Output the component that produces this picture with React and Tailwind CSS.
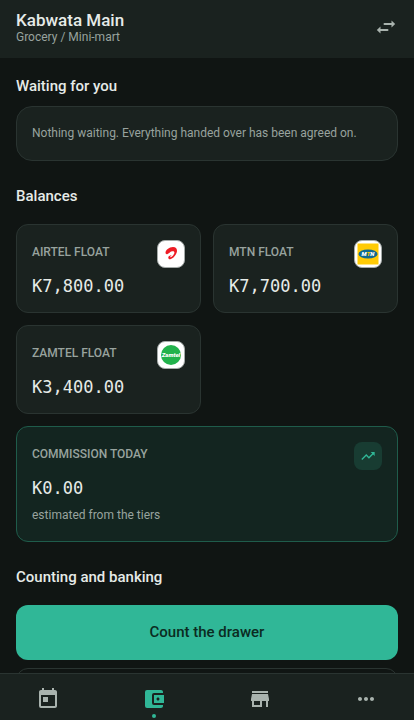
import { useState } from "react";
import {
  MdToday, MdAccountBalanceWallet, MdStore, MdMoreHoriz, MdTrendingUp,
} from "react-icons/md";

const FLOATS = [
  { id: "airtel", label: "AIRTEL FLOAT", amount: "K7,800.00", Logo: AirtelLogo },
  { id: "mtn", label: "MTN FLOAT", amount: "K7,700.00", Logo: MtnLogo },
  { id: "zamtel", label: "ZAMTEL FLOAT", amount: "K3,400.00", Logo: ZamtelLogo },
];

const TABS = [
  { id: "today", label: "Today", Icon: MdToday },
  { id: "wallet", label: "Wallet", Icon: MdAccountBalanceWallet },
  { id: "store", label: "Store", Icon: MdStore },
  { id: "more", label: "More", Icon: MdMoreHoriz },
];

function SwapIcon() {
  return (
    <svg viewBox="0 0 24 24" className="size-6" fill="currentColor" aria-hidden="true">
      <path d="M10.500 8h7V5.600L21.200 9l-3.700 3.400V10h-7a1 1 0 0 1 0-2z" />
      <path d="M13.500 14h-7v-2.400L2.800 15l3.700 3.400V16h7a1 1 0 0 0 0-2z" />
    </svg>
  );
}

function AirtelLogo() {
  return (
    <svg viewBox="0 0 24 24" className="size-6" aria-hidden="true">
      <path fill="#ee1c25"
        d="M6.500 10.800C6.500 8 10 5 14 4.900C17.500 4.900 18.600 7.600 17.700 10.500C16.800 13.500 13.800 16.800 11.300 17.200C9.300 17.400 8.700 15.600 9.800 14.300C10.600 13.500 11.800 13.100 12.800 13C12 13.600 11 14.400 11.200 15.100C11.600 15.900 14.400 13.800 15.200 11.600C15.900 9.700 14.700 8.900 13 9.300C11 9.800 10 11.600 8.200 12.200C7.200 12.400 6.500 11.800 6.500 10.800Z" />
    </svg>
  );
}

function MtnLogo() {
  return (
    <svg viewBox="0 0 24 24" className="size-6" aria-hidden="true">
      <rect x="1.500" y="1.500" width="21" height="21" fill="#ffcb05" />
      <ellipse cx="12" cy="12" rx="9.500" ry="4.600" fill="#0f6a93" />
      <text x="12" y="14" textAnchor="middle" fontFamily="Roboto, sans-serif" fontSize="6"
        fontWeight="900" fontStyle="italic" fill="#fff">M<tspan fill="#ffcb05">T</tspan>N</text>
    </svg>
  );
}

function ZamtelLogo() {
  return (
    <svg viewBox="0 0 24 24" className="size-6" aria-hidden="true">
      <circle cx="12" cy="12" r="10" fill="#22b24c" />
      <text x="12" y="14" textAnchor="middle" fontFamily="Roboto, sans-serif" fontSize="6"
        fontWeight="900" fontStyle="italic" fill="#fff">Zamtel</text>
    </svg>
  );
}

function Amount({ children }) {
  return (
    <p className="mt-2 font-['DejaVu_Sans_Mono',monospace] text-[17px] leading-[21px] text-[#e6ebe8]">
      {children}
    </p>
  );
}

function FloatCard({ label, amount, Logo }) {
  return (
    <div className="rounded-xl border border-[#2a3431] bg-[#1a221f] p-[15px]">
      <div className="flex items-start justify-between">
        <h3 className="text-[12px] leading-6 font-medium text-[#98a39e]">{label}</h3>
        <span className="flex size-7 items-center justify-center rounded-lg border border-[#a4aaa8] bg-white">
          <Logo />
        </span>
      </div>
      <Amount>{amount}</Amount>
    </div>
  );
}

function App() {
  const [tab, setTab] = useState("wallet");

  return (
    <div className="flex h-screen flex-col bg-[#101513] font-[Roboto,sans-serif] text-[#e6ebe8]">

      {/* HEADER */}
      <header className="flex shrink-0 items-center justify-between bg-[#1a221f] px-4 pt-2.5 pb-3.5">
        <div>
          <h1 className="text-[17px] leading-5 font-medium">Kabwata Main</h1>
          <p className="text-[12px] leading-[14px] text-[#98a39e]">Grocery / Mini-mart</p>
        </div>
        <button type="button" aria-label="Switch shop" className="text-[#a9b3ae]">
          <SwapIcon />
        </button>
      </header>

      <main className="flex-1 overflow-y-auto px-4 pt-[18px] pb-4 [scrollbar-width:none]">

        {/* WAITING */}
        <section>
          <h2 className="text-[15px] leading-5 font-medium">Waiting for you</h2>
          <p className="mt-2.5 rounded-2xl border border-[#2a3431] bg-[#1a221f] px-[15px] py-4 text-[12px] leading-[21px] text-[#98a39e]">
            Nothing waiting. Everything handed over has been agreed on.
          </p>
        </section>

        {/* BALANCES */}
        <section className="mt-[25px]">
          <h2 className="text-[15px] leading-5 font-medium">Balances</h2>
          <div className="mt-[18px] grid grid-cols-2 gap-3">
            {FLOATS.map(f => <FloatCard key={f.id} {...f} />)}

            <div className="col-span-2 rounded-xl border border-[#1f5c4b] bg-[#132520] p-[15px]">
              <div className="flex items-start justify-between">
                <h3 className="text-[12px] leading-6 font-medium text-[#98a39e]">COMMISSION TODAY</h3>
                <span className="flex size-7 items-center justify-center rounded-lg bg-[#183c32] text-[#30b797]">
                  <MdTrendingUp size={16} />
                </span>
              </div>
              <Amount>K0.00</Amount>
              <p className="mt-1.5 text-[12px] leading-[21px] text-[#98a39e]">estimated from the tiers</p>
            </div>
          </div>
        </section>

        {/* COUNTING */}
        <section className="mt-[25px]">
          <h2 className="text-[15px] leading-5 font-medium">Counting and banking</h2>
          <div className="mt-[18px] flex flex-col gap-2">
            <button type="button" className="h-[55px] shrink-0 rounded-xl bg-[#30b797] text-[15px] font-medium text-[#0b2b22]">
              Count the drawer
            </button>
            <button type="button" aria-label="Bank cash" className="h-[55px] shrink-0 rounded-xl border border-[#2a3431]" />
          </div>
        </section>
      </main>

      {/* BOTTOM TABS */}
      <nav className="flex shrink-0 justify-between border-t border-[#2a3431] bg-[#1a221f] px-6">
        {TABS.map(({ id, label, Icon }) => (
          <button key={id} type="button" aria-label={label} onClick={() => setTab(id)}
            className={`flex w-12 flex-col items-center gap-[3px] pt-[13px] pb-0.5 ${tab === id ? "text-[#30b797]" : "text-[#a9b3ae]"}`}>
            <Icon size={24} />
            <span className={`size-1 rounded-full ${tab === id ? "bg-[#30b797]" : "bg-transparent"}`} />
          </button>
        ))}
      </nav>
    </div>
  );
}

export default App;
